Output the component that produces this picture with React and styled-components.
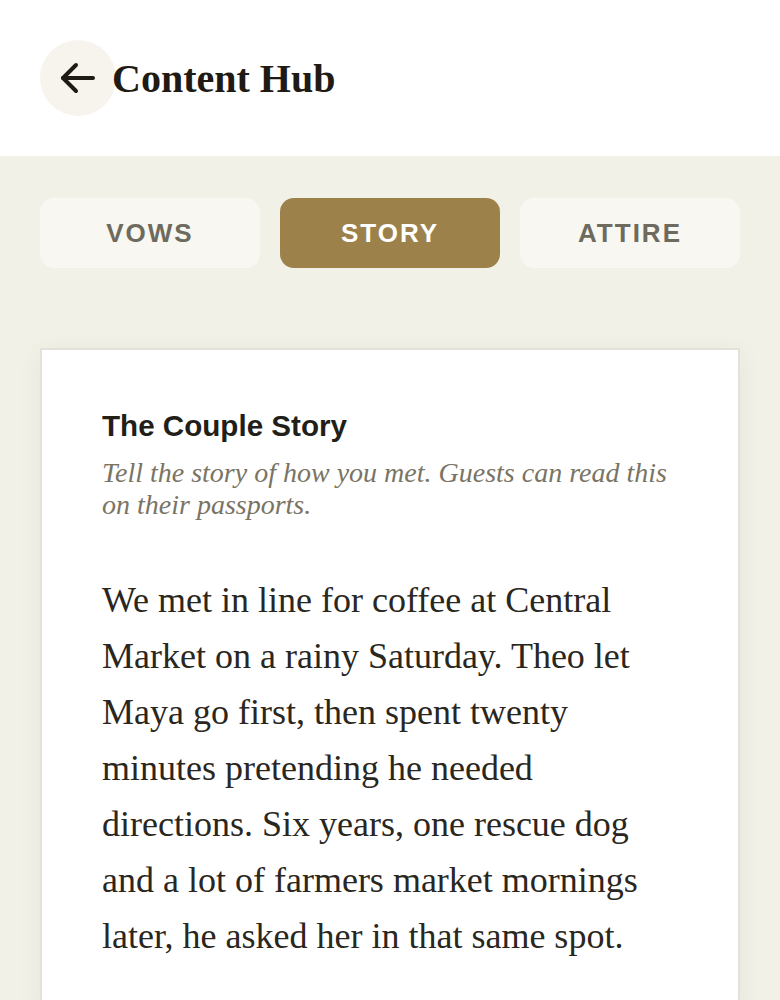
import React, { useState } from 'react';
import styled, { createGlobalStyle } from 'styled-components';

const GlobalStyle = createGlobalStyle`
  html, body {
    margin: 0;
    padding: 0;
    background: #f1f1e8;
  }
  * { box-sizing: border-box; }
`;

const tabs = ['Vows', 'Story', 'Attire'];

const App = () => {
  const [active, setActive] = useState('Story');

  return (
    <Page>
      <GlobalStyle />
      <Header>
        <BackButton aria-label="Back">
          <svg width="40" height="40" viewBox="0 0 40 40" fill="none" stroke="#1f1a14" strokeWidth="4" strokeLinecap="round" strokeLinejoin="round">
            <path d="M35 20H5" />
            <path d="M18 7L5 20l13 13" />
          </svg>
        </BackButton>
        <Title>Content Hub</Title>
      </Header>

      <Main>
        <Tabs>
          {tabs.map(tab => (
            <Tab key={tab} active={active === tab} onClick={() => setActive(tab)}>
              {tab}
            </Tab>
          ))}
        </Tabs>

        <Card>
          <CardTitle>The Couple Story</CardTitle>
          <CardHint>Tell the story of how you met. Guests can read this on their passports.</CardHint>
          <Story>
            We met in line for coffee at Central Market on a rainy Saturday. Theo let Maya go first,
            then spent twenty minutes pretending he needed directions. Six years, one rescue dog and
            a lot of farmers market mornings later, he asked her in that same spot.
          </Story>
        </Card>
      </Main>
    </Page>
  );
};
export default App;

const Page = styled.div`
  min-height: 1000px;
  background: #f1f1e8;
`;

const Header = styled.header`
  height: 156px;
  background: #ffffff;
  display: flex;
  align-items: center;
  padding: 0 40px;
`;

const BackButton = styled.button`
  width: 76px;
  height: 76px;
  border-radius: 50%;
  border: none;
  background: #f7f4ee;
  display: flex;
  align-items: center;
  justify-content: center;
  padding: 0;
  margin-right: -4px;
  cursor: pointer;
`;

const Title = styled.h1`
  margin: 0;
  font-family: "Liberation Serif", "DejaVu Serif", serif;
  font-weight: 700;
  font-size: 40px;
  color: #1f1a14;
`;

const Main = styled.main`
  padding: 42px 40px 0;
`;

const Tabs = styled.div`
  display: grid;
  grid-template-columns: repeat(3, 1fr);
  gap: 20px;
`;

const Tab = styled.button`
  height: 70px;
  border: none;
  border-radius: 14px;
  background: ${p => (p.active ? '#9c824a' : '#f8f7f1')};
  color: ${p => (p.active ? '#ffffff' : '#6e6a5e')};
  font-family: "Liberation Sans", Arial, sans-serif;
  font-weight: 700;
  font-size: 26px;
  letter-spacing: 2px;
  text-transform: uppercase;
  cursor: pointer;
`;

const Card = styled.section`
  margin-top: 80px;
  background: #ffffff;
  border: 2px solid #e4e2d8;
  box-shadow: 0 6px 24px rgba(60, 55, 30, 0.06);
  padding: 58px 60px 40px;
`;

const CardTitle = styled.h2`
  margin: 0;
  font-family: "Liberation Sans", Arial, sans-serif;
  font-weight: 700;
  font-size: 29.6px;
  line-height: 36px;
  color: #221e18;
`;

const CardHint = styled.p`
  margin: 13px 0 0;
  font-family: "Liberation Serif", "Times New Roman", serif;
  font-style: italic;
  font-size: 28px;
  line-height: 32px;
  color: #7a7464;
`;

const Story = styled.p`
  margin: 51px 0 0;
  font-family: "Liberation Serif", "Times New Roman", serif;
  font-size: 36px;
  line-height: 56px;
  color: #2a2620;
`;
